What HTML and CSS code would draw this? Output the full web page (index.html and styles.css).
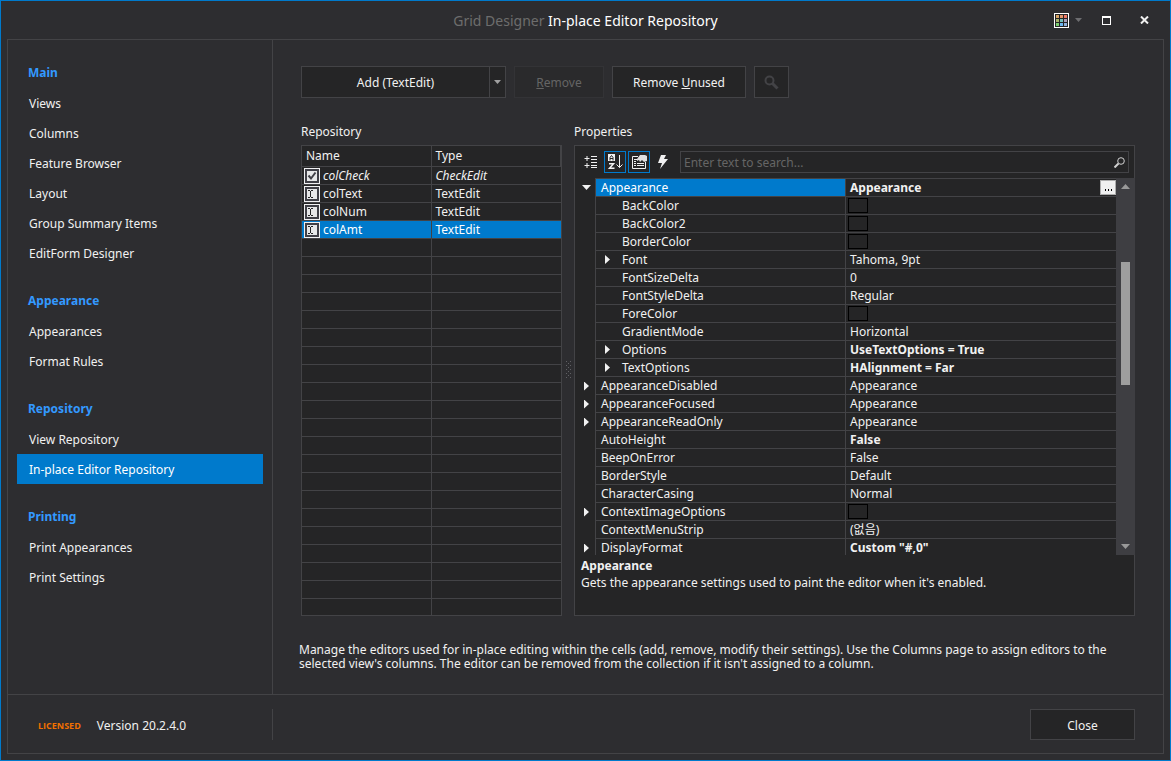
FILE: index.html
```html
<!DOCTYPE html>
<html lang="en">

<head>
    <meta charset="UTF-8">
    <meta name="viewport" content="width=device-width, initial-scale=1.0">
    <title>Grid Designer - In-place Editor Repository</title>
    <link rel="stylesheet" href="styles.css">
</head>

<body>
    <div class="window">
        <header class="title-bar">
            <h1 class="title"><span class="title-prefix">Grid Designer</span> In-place Editor Repository</h1>
            <div class="window-controls">
                <button class="skin-btn" aria-label="Choose skin">
                    <svg width="15" height="15" viewBox="0 0 15 15" shape-rendering="crispEdges">
                        <rect x="0.5" y="0.5" width="14" height="14" fill="#252526" stroke="#fff"/>
                        <rect x="2" y="2" width="3" height="3" fill="#d9a566"/>
                        <rect x="6" y="2" width="3" height="3" fill="#e0956c"/>
                        <rect x="10" y="2" width="3" height="3" fill="#ee7a66"/>
                        <rect x="2" y="6" width="3" height="3" fill="#a9b56c"/>
                        <rect x="6" y="6" width="3" height="3" fill="#74c2bd"/>
                        <rect x="10" y="6" width="3" height="3" fill="#ab9dbb"/>
                        <rect x="2" y="10" width="3" height="3" fill="#7ccf72"/>
                        <rect x="6" y="10" width="3" height="3" fill="#6cb8f5"/>
                        <rect x="10" y="10" width="3" height="3" fill="#8fb0dc"/>
                    </svg>
                    <svg width="7" height="4" viewBox="0 0 7 4"><path d="M0 0h7L3.5 4z" fill="#6d6d70"/></svg>
                </button>
                <button class="window-btn" aria-label="Maximize">
                    <svg width="9" height="9" viewBox="0 0 9 9" shape-rendering="crispEdges"><path d="M0 0h9v9H0zM1 2v6h7V2z" fill="#fff" fill-rule="evenodd"/></svg>
                </button>
                <button class="window-btn" aria-label="Close window">
                    <svg width="9" height="8" viewBox="0 0 9 8"><path d="M1 0.5L8 7.5M8 0.5L1 7.5" stroke="#f1f1f1" stroke-width="2"/></svg>
                </button>
            </div>
        </header>

        <div class="frame">
            <div class="content">
                <nav class="sidebar">
                    <h2>Main</h2>
                    <a href="#">Views</a>
                    <a href="#">Columns</a>
                    <a href="#">Feature Browser</a>
                    <a href="#">Layout</a>
                    <a href="#">Group Summary Items</a>
                    <a href="#">EditForm Designer</a>
                    <h2>Appearance</h2>
                    <a href="#">Appearances</a>
                    <a href="#">Format Rules</a>
                    <h2>Repository</h2>
                    <a href="#">View Repository</a>
                    <a href="#" class="active" aria-current="page">In-place Editor Repository</a>
                    <h2>Printing</h2>
                    <a href="#">Print Appearances</a>
                    <a href="#">Print Settings</a>
                </nav>

                <main class="page">
                    <div class="actions">
                        <div class="split-btn">
                            <button class="btn add-btn">Add (TextEdit)</button>
                            <button class="btn drop-btn" aria-label="More editor types">
                                <svg width="7" height="4" viewBox="0 0 7 4"><path d="M0 0h7L3.5 4z" fill="#a0a0a0"/></svg>
                            </button>
                        </div>
                        <button class="btn remove-btn" disabled><span><u>R</u>emove</span></button>
                        <button class="btn unused-btn"><span>Remove <u>U</u>nused</span></button>
                        <button class="btn search-btn" aria-label="Search" disabled>
                            <svg width="15" height="15" viewBox="0 0 15 15" fill="none" stroke="#434346"><circle cx="5.5" cy="5.5" r="4" stroke-width="2"/><path d="M8.5 8.5L13.5 13.5" stroke-width="3"/></svg>
                        </button>
                    </div>

                    <div class="panels">
                        <section class="repository">
                            <h3 id="repositoryLabel">Repository</h3>
                            <div class="panel repository-panel">
                                <table class="editors" aria-labelledby="repositoryLabel">
                                    <thead>
                                        <tr>
                                            <th>Name</th>
                                            <th>Type</th>
                                        </tr>
                                    </thead>
                                    <tbody id="editorRows">
                                        <tr class="italic">
                                            <td>
                                                <div class="editor-name">
                                                    <svg width="16" height="16" viewBox="0 0 16 16"><path d="M0 0h16v16H0z" fill="#f0f0f2"/><path d="M1 1h14v14H1z" fill="#3f3f46"/><path d="M3 3h10v10H3z" fill="#e6e7e8"/><path d="M4.5 7.5L7 10.5L11.5 4.5" fill="none" stroke="#3f3f46" stroke-width="2"/></svg>
                                                    colCheck
                                                </div>
                                            </td>
                                            <td>CheckEdit</td>
                                        </tr>
                                        <tr>
                                            <td>
                                                <div class="editor-name">
                                                    <svg width="16" height="16" viewBox="0 0 16 16"><path d="M0 0h16v16H0z" fill="#f0f0f2"/><path d="M1 1h14v14H1z" fill="#3f3f46"/><path d="M3 3h10v10H3z" fill="#e6e7e8"/><path d="M4 4.5h2M7 4.5h2M6.5 5v6M4 11.5h2M7 11.5h2" stroke="#252526"/></svg>
                                                    colText
                                                </div>
                                            </td>
                                            <td>TextEdit</td>
                                        </tr>
                                        <tr>
                                            <td>
                                                <div class="editor-name">
                                                    <svg width="16" height="16" viewBox="0 0 16 16"><path d="M0 0h16v16H0z" fill="#f0f0f2"/><path d="M1 1h14v14H1z" fill="#3f3f46"/><path d="M3 3h10v10H3z" fill="#e6e7e8"/><path d="M4 4.5h2M7 4.5h2M6.5 5v6M4 11.5h2M7 11.5h2" stroke="#252526"/></svg>
                                                    colNum
                                                </div>
                                            </td>
                                            <td>TextEdit</td>
                                        </tr>
                                        <tr class="selected">
                                            <td>
                                                <div class="editor-name">
                                                    <svg width="16" height="16" viewBox="0 0 16 16"><path d="M0 0h16v16H0z" fill="#f0f0f2"/><path d="M1 1h14v14H1z" fill="#3f3f46"/><path d="M3 3h10v10H3z" fill="#e6e7e8"/><path d="M4 4.5h2M7 4.5h2M6.5 5v6M4 11.5h2M7 11.5h2" stroke="#252526"/></svg>
                                                    colAmt
                                                </div>
                                            </td>
                                            <td>TextEdit</td>
                                        </tr>
                                    </tbody>
                                </table>
                            </div>
                        </section>

                        <div class="splitter">
                            <svg width="5" height="17" viewBox="0 0 5 17" shape-rendering="crispEdges"><path d="M0 0h1v1H0zM4 0h1v1H4zM2 2h1v1H2zM0 4h1v1H0zM4 4h1v1H4zM2 6h1v1H2zM0 8h1v1H0zM4 8h1v1H4zM2 10h1v1H2zM0 12h1v1H0zM4 12h1v1H4zM2 14h1v1H2zM0 16h1v1H0zM4 16h1v1H4z" fill="#606064"/></svg>
                        </div>

                        <section class="properties">
                            <h3 id="propertiesLabel">Properties</h3>
                            <div class="panel properties-panel">
                                <div class="toolbar">
                                    <button class="tool-btn" aria-label="Categorized">
                                        <svg width="14" height="14" viewBox="0 0 14 14" stroke="#f1f1f1" fill="none"><path d="M0.5 3.5h5M3 1v5M0.5 10.5h5M3 8v5M7 1.5h6M7 4.5h6M7 7.5h6M7 10.5h6M7 12.5h6"/></svg>
                                    </button>
                                    <button class="tool-btn on" aria-label="Alphabetical" aria-pressed="true">
                                        <svg width="16" height="16" viewBox="0 0 16 16" fill="none"><path d="M1 0h7v7H1z" fill="#f1f1f1"/><path d="M3 6.500V3.500L4.500 1.500L6 3.500v3M3 4.500h3" stroke="#252526"/><path d="M2 9.750h4.500L2.500 14.250H7.500" stroke="#f1f1f1" stroke-width="1.500"/><path d="M12.500 1v12.500M9.500 10.500l3 3l3-3" stroke="#f1f1f1"/></svg>
                                    </button>
                                    <button class="tool-btn on" aria-label="Properties" aria-pressed="true">
                                        <svg width="16" height="16" viewBox="0 0 16 16" fill="none"><path d="M7 2.500H1.500v12h13V8" stroke="#f1f1f1"/><path d="M3 5h3v1H3zM3 7h2v1H3zM3 9h2v1H3zM6 9h7v1H6zM3 11h2v1H3zM6 11h7v1H6z" fill="#f1f1f1"/><path d="M6 5l3-4h5l2 1v5l-3 1l-2-2l-2 2l-1-2l-2 1z" fill="#e0e0e0"/></svg>
                                    </button>
                                    <button class="tool-btn" aria-label="Events">
                                        <svg width="12" height="14" viewBox="0 0 12 14"><path d="M4 0h5L7 4h4L3 14l2-6H1z" fill="#f1f1f1"/></svg>
                                    </button>
                                    <div class="search-box">
                                        <input type="text" aria-label="Search properties" placeholder="Enter text to search...">
                                        <svg width="11" height="11" viewBox="0 0 11 11" fill="none" stroke="#d0d0d0"><circle cx="7" cy="4" r="3.300"/><path d="M4.500 6.500L0.500 10.500" stroke-width="2"/></svg>
                                    </div>
                                </div>

                                <div class="grid-area">
                                    <div class="grid-view">
                                        <table class="property-grid" aria-labelledby="propertiesLabel">
                                            <colgroup>
                                                <col class="col-gutter">
                                                <col class="col-name">
                                                <col>
                                            </colgroup>
                                            <tbody>
                                                <tr class="focused">
                                                    <td><button class="expander open" aria-label="Collapse Appearance"></button></td>
                                                    <th>Appearance</th>
                                                    <td class="changed"><div class="value-editor">Appearance <button class="ellipsis-btn" aria-label="Edit Appearance"><svg width="7" height="2" viewBox="0 0 7 2" shape-rendering="crispEdges"><path d="M0 0h1v2H0zM3 0h1v2H3zM6 0h1v2H6z" fill="#000"/></svg></button></div></td>
                                                </tr>
                                                <tr class="child">
                                                    <td></td>
                                                    <th>BackColor</th>
                                                    <td><div class="swatch"></div></td>
                                                </tr>
                                                <tr class="child">
                                                    <td></td>
                                                    <th>BackColor2</th>
                                                    <td><div class="swatch"></div></td>
                                                </tr>
                                                <tr class="child">
                                                    <td></td>
                                                    <th>BorderColor</th>
                                                    <td><div class="swatch"></div></td>
                                                </tr>
                                                <tr class="child">
                                                    <td></td>
                                                    <th><div class="group-name"><button class="expander" aria-label="Expand Font"></button>Font</div></th>
                                                    <td>Tahoma, 9pt</td>
                                                </tr>
                                                <tr class="child">
                                                    <td></td>
                                                    <th>FontSizeDelta</th>
                                                    <td>0</td>
                                                </tr>
                                                <tr class="child">
                                                    <td></td>
                                                    <th>FontStyleDelta</th>
                                                    <td>Regular</td>
                                                </tr>
                                                <tr class="child">
                                                    <td></td>
                                                    <th>ForeColor</th>
                                                    <td><div class="swatch"></div></td>
                                                </tr>
                                                <tr class="child">
                                                    <td></td>
                                                    <th>GradientMode</th>
                                                    <td>Horizontal</td>
                                                </tr>
                                                <tr class="child">
                                                    <td></td>
                                                    <th><div class="group-name"><button class="expander" aria-label="Expand Options"></button>Options</div></th>
                                                    <td class="changed">UseTextOptions = True</td>
                                                </tr>
                                                <tr class="child">
                                                    <td></td>
                                                    <th><div class="group-name"><button class="expander" aria-label="Expand TextOptions"></button>TextOptions</div></th>
                                                    <td class="changed">HAlignment = Far</td>
                                                </tr>
                                                <tr>
                                                    <td><button class="expander" aria-label="Expand AppearanceDisabled"></button></td>
                                                    <th>AppearanceDisabled</th>
                                                    <td>Appearance</td>
                                                </tr>
                                                <tr>
                                                    <td><button class="expander" aria-label="Expand AppearanceFocused"></button></td>
                                                    <th>AppearanceFocused</th>
                                                    <td>Appearance</td>
                                                </tr>
                                                <tr>
                                                    <td><button class="expander" aria-label="Expand AppearanceReadOnly"></button></td>
                                                    <th>AppearanceReadOnly</th>
                                                    <td>Appearance</td>
                                                </tr>
                                                <tr>
                                                    <td></td>
                                                    <th>AutoHeight</th>
                                                    <td class="changed">False</td>
                                                </tr>
                                                <tr>
                                                    <td></td>
                                                    <th>BeepOnError</th>
                                                    <td>False</td>
                                                </tr>
                                                <tr>
                                                    <td></td>
                                                    <th>BorderStyle</th>
                                                    <td>Default</td>
                                                </tr>
                                                <tr>
                                                    <td></td>
                                                    <th>CharacterCasing</th>
                                                    <td>Normal</td>
                                                </tr>
                                                <tr>
                                                    <td><button class="expander" aria-label="Expand ContextImageOptions"></button></td>
                                                    <th>ContextImageOptions</th>
                                                    <td><div class="swatch"></div></td>
                                                </tr>
                                                <tr>
                                                    <td></td>
                                                    <th>ContextMenuStrip</th>
                                                    <td>(<span lang="ko">없음</span>)</td>
                                                </tr>
                                                <tr>
                                                    <td><button class="expander" aria-label="Expand DisplayFormat"></button></td>
                                                    <th>DisplayFormat</th>
                                                    <td class="changed">Custom "#,0"</td>
                                                </tr>
                                            </tbody>
                                        </table>
                                    </div>
                                    <div class="scrollbar">
                                        <button class="scroll-btn" aria-label="Scroll up"><svg width="9" height="5" viewBox="0 0 9 5"><path d="M0 5h9L4.500 0z" fill="#999"/></svg></button>
                                        <div class="track">
                                            <div class="thumb"></div>
                                        </div>
                                        <button class="scroll-btn" aria-label="Scroll down"><svg width="9" height="5" viewBox="0 0 9 5"><path d="M0 0h9L4.500 5z" fill="#999"/></svg></button>
                                    </div>
                                </div>

                                <div class="help">
                                    <h4>Appearance</h4>
                                    <p>Gets the appearance settings used to paint the editor when it's enabled.</p>
                                </div>
                            </div>
                        </section>
                    </div>

                    <p class="description">Manage the editors used for in-place editing within the cells (add, remove, modify their settings). Use the Columns page to assign editors to the selected view's columns. The editor can be removed from the collection if it isn't assigned to a column.</p>
                </main>
            </div>

            <footer class="footer">
                <div class="version">
                    <span class="licensed">LICENSED</span>
                    <span>Version 20.2.4.0</span>
                </div>
                <button class="btn close-btn">Close</button>
            </footer>
        </div>
    </div>

    <script>
        // fill the rest of the list with empty rows
        const editorRows = document.getElementById("editorRows");
        for (let i = 0; i < 21; i++) {
            const row = editorRows.insertRow();
            row.insertCell();
            row.insertCell();
        }
    </script>
</body>

</html>
```
FILE: styles.css
```css
* {
    box-sizing: border-box;
}

body {
    margin: 0;
    background: #2d2d30;
    color: #f1f1f1;
    font-family: Tahoma, "Noto Sans", "Noto Sans CJK KR", sans-serif;
    font-size: 12px;
    line-height: 14px;
}

h1,
h2,
h3,
h4,
p {
    margin: 0;
    font-size: 12px;
    font-weight: normal;
}

button,
input {
    margin: 0;
    padding: 0;
    border: none;
    background: none;
    color: inherit;
    font: inherit;
}

svg {
    display: block;
    flex: none;
}

.window {
    display: flex;
    flex-direction: column;
    height: 100vh;
    padding: 0 6px 6px;
    border: 1px solid #007acc;
}

.title-bar {
    display: grid;
    grid-template-columns: 1fr auto 1fr;
    align-items: center;
    height: 38px;
}

.title {
    grid-column: 2;
    padding-top: 2px;
    color: #fff;
    font-size: 14px;
}

.title-prefix {
    color: #6d6d6d;
}

.window-controls {
    display: flex;
    justify-content: flex-end;
    padding-right: 1px;
}

.skin-btn {
    display: flex;
    align-items: center;
    gap: 6px;
    padding-right: 5px;
}

.window-btn {
    display: flex;
    align-items: center;
    justify-content: center;
    width: 38px;
    height: 30px;
}

.frame {
    flex: 1;
    min-height: 0;
    display: flex;
    flex-direction: column;
    border: 1px solid #434346;
}

.content {
    flex: 1;
    min-height: 0;
    display: flex;
}

.sidebar {
    flex: none;
    width: 265px;
    padding: 0 9px;
    border-right: 1px solid #434346;
}

.sidebar h2 {
    padding: 18px 11px 0;
    color: #3399ff;
    font-weight: bold;
    line-height: 30px;
}

.sidebar a {
    display: block;
    padding: 2px 12px 0;
    color: #f1f1f1;
    line-height: 28px;
    text-decoration: none;
}

.sidebar a.active {
    background: #007acc;
    color: #fff;
}

.page {
    flex: 1;
    min-width: 0;
    display: flex;
    flex-direction: column;
    padding-top: 26px;
}

.actions {
    display: flex;
    gap: 8px;
    padding: 0 28px;
}

.btn {
    display: flex;
    align-items: center;
    justify-content: center;
    height: 32px;
    padding-top: 2px;
    border: 1px solid #434346;
    background: #252526;
}

.btn:disabled {
    color: #656565;
}

.split-btn {
    display: flex;
}

.add-btn {
    width: 188px;
    border-right: none;
}

.drop-btn {
    width: 17px;
    padding-top: 0;
}

.remove-btn {
    width: 90px;
    border-color: #333336;
    background: #2a2a2c;
}

.unused-btn {
    width: 134px;
}

.search-btn {
    width: 35px;
    padding-top: 0;
}

.panels {
    flex: 1;
    min-height: 0;
    display: flex;
    padding: 25px 28px 0;
}

.panels h3 {
    margin-bottom: 4px;
    line-height: 18px;
}

.panel {
    flex: 1;
    min-height: 0;
    border: 1px solid #434346;
    background: #252526;
}

.repository,
.properties {
    display: flex;
    flex-direction: column;
}

.repository {
    flex: none;
    width: 261px;
}

.repository-panel {
    overflow: hidden;
}

table {
    width: 100%;
    table-layout: fixed;
    border-collapse: separate;
    border-spacing: 0;
}

th,
td {
    height: 18px;
    padding: 0 4px;
    border-bottom: 1px solid #434346;
    font-weight: normal;
    line-height: 17px;
    text-align: left;
    white-space: nowrap;
}

.editors th {
    height: 21px;
    border-right: 1px solid #434346;
    line-height: 20px;
}

.editors td:first-child {
    padding: 0 2px;
    border-right: 1px solid #434346;
}

.editors .italic {
    font-style: italic;
}

.editors .selected td {
    background: #007acc;
    color: #fff;
}

.editor-name {
    display: flex;
    align-items: center;
    gap: 3px;
    height: 17px;
}

.splitter {
    flex: none;
    display: flex;
    align-items: center;
    justify-content: center;
    width: 12px;
}

.properties {
    flex: 1;
    min-width: 0;
}

.properties-panel {
    display: flex;
    flex-direction: column;
    border-right: none;
}

.toolbar {
    display: flex;
    gap: 2px;
    padding: 5px;
    border-right: 1px solid #434346;
}

.tool-btn {
    display: flex;
    align-items: center;
    justify-content: center;
    width: 22px;
    height: 22px;
}

.tool-btn.on {
    border: 1px solid #007acc;
}

.search-box {
    flex: 1;
    display: flex;
    align-items: center;
    margin-left: 4px;
    padding: 0 3px;
    border: 1px solid #434346;
}

.search-box input {
    flex: 1;
    min-width: 0;
    padding-top: 2px;
    outline: none;
}

.search-box input::placeholder {
    color: #656565;
    opacity: 1;
}

.grid-area {
    flex: 1;
    min-height: 0;
    display: flex;
}

.grid-view {
    flex: 1;
    min-width: 0;
    overflow: hidden;
}

.col-gutter {
    width: 20px;
}

.col-name {
    width: 251px;
}

.property-grid td:first-child {
    padding: 0 9px;
    border: none;
}

.property-grid th {
    padding: 0 5px;
    border-right: 1px solid #434346;
    border-left: 1px solid #434346;
}

.property-grid tr:first-child th,
.property-grid tr:first-child td:last-child {
    border-top: 1px solid #434346;
}

.property-grid .child th {
    padding-left: 26px;
}

.property-grid .changed {
    font-weight: bold;
}

.property-grid .focused th {
    background: #007acc;
    color: #fff;
}

.expander {
    display: block;
    width: 5px;
    height: 9px;
    background: #f1f1f1;
    clip-path: polygon(0 0, 100% 50%, 0 100%);
}

.expander.open {
    width: 9px;
    height: 5px;
    margin-left: -2px;
    clip-path: polygon(0 0, 100% 0, 50% 100%);
}

.group-name {
    display: flex;
    align-items: center;
    gap: 12px;
    margin-left: -17px;
}

.value-editor {
    display: flex;
    align-items: center;
    justify-content: space-between;
    height: 17px;
    margin-right: -4px;
}

.ellipsis-btn {
    display: flex;
    align-items: flex-end;
    justify-content: center;
    width: 16px;
    height: 15px;
    padding-bottom: 3px;
    border: 1px solid #adadad;
    background: #f0f0f0;
}

.swatch {
    width: 20px;
    height: 15px;
    margin-left: -2px;
    border: 1px solid #000;
}

.scrollbar {
    flex: none;
    display: flex;
    flex-direction: column;
    width: 19px;
    background: #3e3e42;
}

.scroll-btn {
    display: flex;
    align-items: center;
    justify-content: center;
    height: 17px;
}

.track {
    flex: 1;
    padding: 0 5px;
}

.thumb {
    height: 36%;
    margin-top: 67px;
    background: #9e9e9e;
}

.help {
    height: 60px;
    padding: 4px 6px;
    border-right: 1px solid #434346;
}

.help h4 {
    font-weight: bold;
    line-height: 14px;
}

.help p {
    line-height: 20px;
}

.description {
    padding: 27px 40px 23px 26px;
}

.footer {
    display: flex;
    align-items: center;
    justify-content: space-between;
    height: 59px;
    padding: 1px 28px 0 0;
    border-top: 1px solid #434346;
}

.version {
    display: flex;
    align-items: center;
    gap: 16px;
    width: 265px;
    height: 31px;
    padding: 2px 0 0 30px;
    border-right: 1px solid #434346;
}

.licensed {
    color: #f07000;
    font-family: "Open Sans", sans-serif;
    font-size: 9px;
    font-weight: bold;
}

.close-btn {
    width: 105px;
    height: 31px;
}
```
